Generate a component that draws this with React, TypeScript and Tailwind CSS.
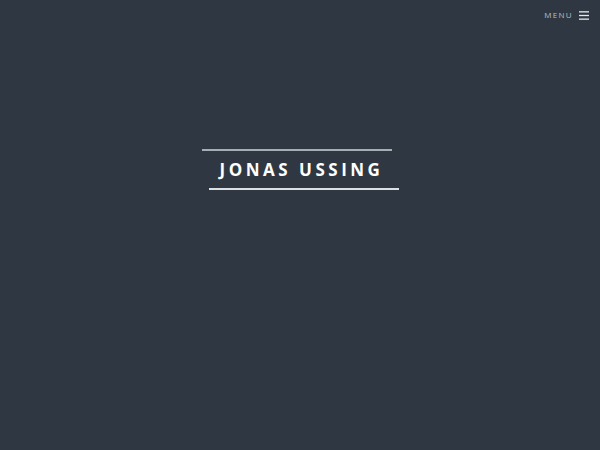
import React from "react";

export default function App() {
  return (
    <div
      className="w-full h-[450px] bg-[#2f3842] flex flex-col"
      style={{ fontFamily: '"Open Sans", "Liberation Sans", sans-serif' }}
    >
      <div className="flex justify-end items-center h-[30px] pr-[11px] gap-[6px]">
        <span className="text-[8px] tracking-[1.3px] text-[#b9bec3] leading-none">MENU</span>
        <svg width="10" height="9" viewBox="0 0 10 9" className="block">
          <rect x="0" y="0.2" width="10" height="1.3" fill="#e6e8ea" />
          <rect x="0" y="3.85" width="10" height="1.3" fill="#e6e8ea" />
          <rect x="0" y="7.5" width="10" height="1.3" fill="#e6e8ea" />
        </svg>
      </div>
      <div className="flex justify-center mt-[119px]">
        <div className="flex flex-col w-[197px]">
          <div className="h-[2px] w-[190px] bg-[#a7aeb3]" />
          <div className="text-center text-white font-bold text-[17px] tracking-[3.5px] leading-[17px] pt-[10px] pb-[10px] pl-[3px]">
            JONAS USSING
          </div>
          <div className="h-[2px] w-[190px] ml-[7px] bg-[#dde0e2]" />
        </div>
      </div>
    </div>
  );
}
